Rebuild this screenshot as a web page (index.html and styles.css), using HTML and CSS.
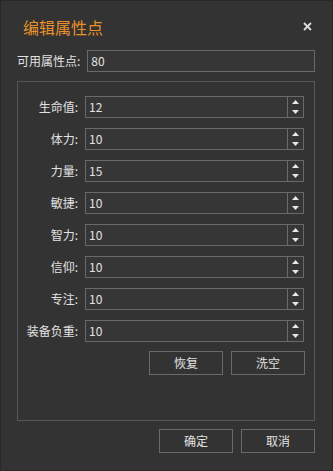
FILE: index.html
```html
<!DOCTYPE html>
<html lang="zh">
<head>
<meta charset="utf-8">
<link rel="stylesheet" href="styles.css">
</head>
<body>
<div class="window">
  <div class="header">
    <div class="title">编辑属性点</div>
    <svg class="close" width="9" height="9" viewBox="0 0 9 9"><path d="M1 1L8 8M8 1L1 8" stroke="#dcdcdc" stroke-width="1.8"/></svg>
  </div>
  <div class="avail">
    <span class="label">可用属性点:</span>
    <div class="field">80</div>
  </div>
  <div class="group">
    <div class="grid">
      <span class="label">生命值:</span><div class="spin"><span class="val">12</span><span class="btns"><svg width="7" height="14" viewBox="0 0 7 14"><path d="M3.5 0L7 4H0Z M0 10H7L3.5 14Z" fill="#e6e6e6"/></svg></span></div>
      <span class="label">体力:</span><div class="spin"><span class="val">10</span><span class="btns"><svg width="7" height="14" viewBox="0 0 7 14"><path d="M3.5 0L7 4H0Z M0 10H7L3.5 14Z" fill="#e6e6e6"/></svg></span></div>
      <span class="label">力量:</span><div class="spin"><span class="val">15</span><span class="btns"><svg width="7" height="14" viewBox="0 0 7 14"><path d="M3.5 0L7 4H0Z M0 10H7L3.5 14Z" fill="#e6e6e6"/></svg></span></div>
      <span class="label">敏捷:</span><div class="spin"><span class="val">10</span><span class="btns"><svg width="7" height="14" viewBox="0 0 7 14"><path d="M3.5 0L7 4H0Z M0 10H7L3.5 14Z" fill="#e6e6e6"/></svg></span></div>
      <span class="label">智力:</span><div class="spin"><span class="val">10</span><span class="btns"><svg width="7" height="14" viewBox="0 0 7 14"><path d="M3.5 0L7 4H0Z M0 10H7L3.5 14Z" fill="#e6e6e6"/></svg></span></div>
      <span class="label">信仰:</span><div class="spin"><span class="val">10</span><span class="btns"><svg width="7" height="14" viewBox="0 0 7 14"><path d="M3.5 0L7 4H0Z M0 10H7L3.5 14Z" fill="#e6e6e6"/></svg></span></div>
      <span class="label">专注:</span><div class="spin"><span class="val">10</span><span class="btns"><svg width="7" height="14" viewBox="0 0 7 14"><path d="M3.5 0L7 4H0Z M0 10H7L3.5 14Z" fill="#e6e6e6"/></svg></span></div>
      <span class="label">装备负重:</span><div class="spin"><span class="val">10</span><span class="btns"><svg width="7" height="14" viewBox="0 0 7 14"><path d="M3.5 0L7 4H0Z M0 10H7L3.5 14Z" fill="#e6e6e6"/></svg></span></div>
    </div>
    <div class="actions">
      <button class="btn">恢复</button>
      <button class="btn">洗空</button>
    </div>
  </div>
  <div class="footer">
    <button class="btn">确定</button>
    <button class="btn">取消</button>
  </div>
</div>
</body>
</html>
```
FILE: styles.css
```css
* { box-sizing: border-box; }
html, body { margin: 0; padding: 0; }
body {
  background: #333333;
  font-family: "Noto Sans CJK SC", "Microsoft YaHei", sans-serif;
  font-size: 12px;
  color: #e2e2e2;
}
.window {
  width: 333px;
  height: 471px;
  border: 1px solid #282828;
  background: #333333;
  padding: 0 17px 0 16px;
  display: flex;
  flex-direction: column;
}
.header {
  height: 49px;
  padding-top: 2px;
  display: flex;
  align-items: center;
  justify-content: space-between;
  padding-left: 6px;
  padding-right: 3px;
}
.title {
  font-size: 16px;
  color: #e8912c;
  line-height: 20px;
}
.close { display: block; }
.avail {
  display: flex;
  align-items: center;
  gap: 7px;
}
.label {
  line-height: 16px;
  white-space: nowrap;
}
.field {
  flex: 1;
  height: 22px;
  border: 1px solid #6a6a6a;
  background: #363636;
  padding-left: 3px;
  line-height: 20px;
}
.group {
  margin-top: 9px;
  height: 340px;
  border: 1px solid #575757;
  padding: 14px 10px 0 8px;
}
.grid {
  display: grid;
  grid-template-columns: 52px 1fr;
  column-gap: 7px;
  row-gap: 10px;
  align-items: center;
}
.grid .label { justify-self: end; }
.spin {
  height: 22px;
  border: 1px solid #6a6a6a;
  background: #363636;
  display: flex;
}
.val {
  flex: 1;
  padding-left: 3px;
  line-height: 20px;
}
.btns {
  width: 16px;
  border-left: 1px solid #6a6a6a;
  display: flex;
  align-items: center;
  justify-content: center;
}
.btns svg { display: block; }
.actions {
  margin-top: 9px;
  margin-right: -1px;
  display: flex;
  justify-content: flex-end;
  gap: 8px;
}
.btn {
  width: 74px;
  height: 24px;
  border: 1px solid #6a6a6a;
  background: #333333;
  color: #e2e2e2;
  font-family: inherit;
  font-size: 12px;
  padding: 0;
  line-height: 22px;
}
.footer {
  margin-top: 8px;
  display: flex;
  justify-content: flex-end;
  gap: 8px;
}
```
